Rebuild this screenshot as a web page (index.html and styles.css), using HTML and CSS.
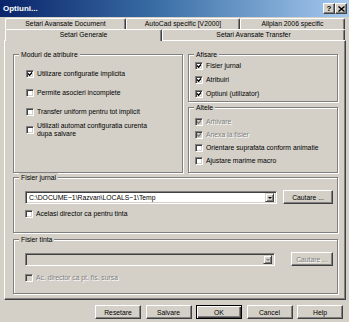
FILE: index.html
```html
<!DOCTYPE html>
<html lang="ro">
<head>
    <meta charset="UTF-8">
    <title>Optiuni...</title>
    <link rel="stylesheet" href="styles.css">
</head>
<body>
    <div class="window">
        <div class="titlebar">
            <span class="title">Optiuni...</span>
            <div class="tb-buttons">
                <span class="tb-btn">?</span>
                <span class="tb-btn">
                    <svg width="7" height="6" viewBox="0 0 7 6"><path d="M0.5 0.5 L6.5 5.5 M6.5 0.5 L0.5 5.5" stroke="#000" stroke-width="1.4"/></svg>
                </span>
            </div>
        </div>

        <div class="tabs">
            <div class="tab-row">
                <div class="tab tab-doc">Setari Avansate Document</div>
                <div class="tab tab-acad">AutoCad specific [V2000]</div>
                <div class="tab tab-fill">Allplan 2006 specific</div>
            </div>
            <div class="tab-row">
                <div class="tab tab-gen active">Setari Generale</div>
                <div class="tab tab-fill">Setari Avansate Transfer</div>
            </div>
        </div>

        <div class="panel">
            <div class="top-row">
                <div class="group moduri">
                    <span class="group-label">Moduri de atribuire</span>
                    <label class="cb"><span class="box checked"></span>Utilizare configuratie implicita</label>
                    <label class="cb"><span class="box"></span>Permite asocieri incomplete</label>
                    <label class="cb"><span class="box"></span>Transfer uniform pentru tot implicit</label>
                    <label class="cb multi"><span class="box"></span><span>Utilizati automat configuratia curenta<br>dupa salvare</span></label>
                </div>
                <div class="right-col">
                    <div class="group afisare">
                        <span class="group-label">Afisare</span>
                        <label class="cb"><span class="box checked"></span>Fisier jurnal</label>
                        <label class="cb"><span class="box checked"></span>Atribuiri</label>
                        <label class="cb"><span class="box checked"></span>Optiuni (utilizator)</label>
                    </div>
                    <div class="group altele">
                        <span class="group-label">Altele</span>
                        <label class="cb disabled"><span class="box checked"></span>Arhivare</label>
                        <label class="cb disabled"><span class="box checked"></span>Anexa la fisier</label>
                        <label class="cb"><span class="box"></span>Orientare suprafata conform animatie</label>
                        <label class="cb"><span class="box"></span>Ajustare marime macro</label>
                    </div>
                </div>
            </div>

            <div class="group jurnal">
                <span class="group-label">Fisier jurnal</span>
                <div class="path-row">
                    <div class="combo">
                        <span class="combo-text">C:\DOCUME~1\Razvan\LOCALS~1\Temp</span>
                        <span class="combo-arrow"></span>
                    </div>
                    <button class="btn browse">Cautare ...</button>
                </div>
                <label class="cb"><span class="box"></span>Acelasi director ca pentru tinta</label>
            </div>

            <div class="group tinta">
                <span class="group-label">Fisier tinta</span>
                <div class="path-row wide-gap">
                    <div class="combo disabled">
                        <span class="combo-text"></span>
                        <span class="combo-arrow"></span>
                    </div>
                    <button class="btn browse small disabled">Cautare ...</button>
                </div>
                <label class="cb disabled"><span class="box"></span>Ac. director ca pt. fis. sursa</label>
            </div>
        </div>

        <div class="buttons">
            <button class="btn">Resetare</button>
            <button class="btn">Salvare</button>
            <button class="btn default">OK</button>
            <button class="btn">Cancel</button>
            <button class="btn">Help</button>
        </div>
    </div>
</body>
</html>
```

FILE: styles.css
```css
* {
    margin: 0;
    padding: 0;
    box-sizing: border-box;
}

body {
    font-family: 'Liberation Sans', Arial, sans-serif;
    font-size: 6.8px;
    color: #000;
    background: #d4d0c8;
    overflow: hidden;
}

.window {
    width: 349px;
    height: 322px;
    background: #d4d0c8;
    display: flex;
    flex-direction: column;
}

/* title bar */
.titlebar {
    height: 17px;
    background: linear-gradient(to right, #0a246a 0%, #3a6ea5 45%, #a6caf0 100%);
    display: flex;
    align-items: center;
    justify-content: space-between;
    padding: 0 2px 0 3px;
}

.title {
    color: #fff;
    font-weight: bold;
    font-size: 8px;
}

.tb-buttons {
    display: flex;
}

.tb-btn {
    width: 12px;
    height: 11px;
    background: #d4d0c8;
    border: 1px solid;
    border-color: #fff #404040 #404040 #fff;
    box-shadow: inset -1px -1px 0 #808080;
    display: flex;
    align-items: center;
    justify-content: center;
    font-weight: bold;
    font-size: 8px;
    line-height: 1;
}

/* tabs */
.tabs {
    display: flex;
    flex-direction: column;
    padding: 1px 4px 0 5px;
}

.tab-row {
    display: flex;
    height: 11px;
}

.tab {
    text-align: center;
    line-height: 10px;
    white-space: nowrap;
    border-top: 1px solid #fff;
    border-left: 1px solid #fff;
    border-right: 1px solid #404040;
    box-shadow: inset -1px 0 0 #808080;
    border-radius: 2px 2px 0 0;
}

.tab-doc { width: 121px; }
.tab-acad { width: 114px; }
.tab-gen { width: 157px; }
.tab-fill { flex: 1; }

.tab.active {
    position: relative;
    z-index: 1;
    background: #d4d0c8;
    height: 12px;
    margin-bottom: -1px;
}

/* main panel */
.panel {
    margin: 0 3px 0 4px;
    border: 1px solid;
    border-color: #fff #404040 #404040 #fff;
    box-shadow: inset -1px -1px 0 #808080;
    padding: 13px 7px 5px 8px;
}

.top-row {
    display: flex;
    gap: 5px;
    height: 119px;
}

.right-col {
    display: flex;
    flex-direction: column;
    gap: 5px;
    width: 150px;
}

.group {
    position: relative;
    border: 1px solid #808080;
    box-shadow: inset 1px 1px 0 #fff, 1px 1px 0 #fff;
    display: flex;
    flex-direction: column;
}

.group-label {
    position: absolute;
    top: -5px;
    left: 5px;
    padding: 0 2px;
    background: #d4d0c8;
    line-height: 9px;
}

.moduri {
    width: 170px;
    padding: 14px 0 0 12px;
    gap: 10px;
}

.afisare {
    height: 48px;
    padding: 6px 0 0 6px;
    gap: 5px;
}

.altele {
    flex: 1;
    padding: 9px 0 0 6px;
    gap: 4px;
}

.jurnal {
    margin-top: 4px;
    height: 56px;
    padding: 12px 0 0 11px;
    gap: 5px;
}

.tinta {
    margin-top: 6px;
    height: 55px;
    padding: 12px 0 0 11px;
    gap: 7px;
}

/* checkboxes */
.cb {
    display: flex;
    align-items: center;
    gap: 3px;
    height: 9px;
    line-height: 8px;
    white-space: nowrap;
}

.cb.multi {
    height: 16px;
    margin-top: -4px;
}

.box {
    flex: none;
    width: 8px;
    height: 8px;
    background: #fff;
    border: 1px solid;
    border-color: #808080 #fff #fff #808080;
    box-shadow: inset 1px 1px 0 #404040, inset -1px -1px 0 #d4d0c8;
}

.box.checked {
    background: #fff url("data:image/svg+xml,%3Csvg xmlns='http://www.w3.org/2000/svg' width='6' height='6'%3E%3Cpath d='M1 2.6 L2.6 4.2 L5.3 1.2' fill='none' stroke='%23000' stroke-width='1.4'/%3E%3C/svg%3E") center / 6px 6px no-repeat;
}

.cb.disabled {
    color: #808080;
    text-shadow: 1px 1px 0 #fff;
}

.cb.disabled .box {
    background-color: #d4d0c8;
}

.cb.disabled .box.checked {
    background-image: url("data:image/svg+xml,%3Csvg xmlns='http://www.w3.org/2000/svg' width='6' height='6'%3E%3Cpath d='M1 2.6 L2.6 4.2 L5.3 1.2' fill='none' stroke='%23808080' stroke-width='1.4'/%3E%3C/svg%3E");
}

/* path rows */
.path-row {
    display: flex;
    align-items: center;
    gap: 6px;
    height: 14px;
}

.path-row.wide-gap {
    gap: 16px;
}

.combo {
    width: 252px;
    height: 13px;
    background: #fff;
    border: 1px solid;
    border-color: #808080 #fff #fff #808080;
    box-shadow: inset 1px 1px 0 #404040, inset -1px -1px 0 #d4d0c8;
    display: flex;
    align-items: center;
    padding: 2px 2px 2px 2px;
}

.combo.disabled {
    width: 250px;
    background: #d4d0c8;
}

.combo-text {
    flex: 1;
    padding-left: 1px;
    white-space: nowrap;
}

.combo-arrow {
    width: 9px;
    height: 9px;
    background: #d4d0c8;
    border: 1px solid;
    border-color: #d4d0c8 #404040 #404040 #d4d0c8;
    box-shadow: inset 1px 1px 0 #fff, inset -1px -1px 0 #808080;
    position: relative;
}

.combo-arrow::after {
    content: "";
    position: absolute;
    left: 2px;
    top: 3px;
    border-left: 2px solid transparent;
    border-right: 2px solid transparent;
    border-top: 2px solid #000;
}

.combo.disabled .combo-arrow::after {
    border-top-color: #808080;
}

/* buttons */
.btn {
    font-family: inherit;
    font-size: inherit;
    color: #000;
    background: #d4d0c8;
    border: 1px solid;
    border-color: #fff #404040 #404040 #fff;
    box-shadow: inset -1px -1px 0 #808080;
    height: 14px;
    width: 46px;
    line-height: 11px;
}

.btn.browse {
    width: 50px;
}

.btn.browse.small {
    width: 42px;
}

.btn.disabled {
    color: #808080;
    text-shadow: 1px 1px 0 #fff;
}

.btn.default {
    border: 1px solid #000;
    box-shadow: inset 1px 1px 0 #fff, inset -1px -1px 0 #404040, inset -2px -2px 0 #808080;
}

.buttons {
    display: flex;
    gap: 4.5px;
    padding: 5px 0 0 95px;
}
```
